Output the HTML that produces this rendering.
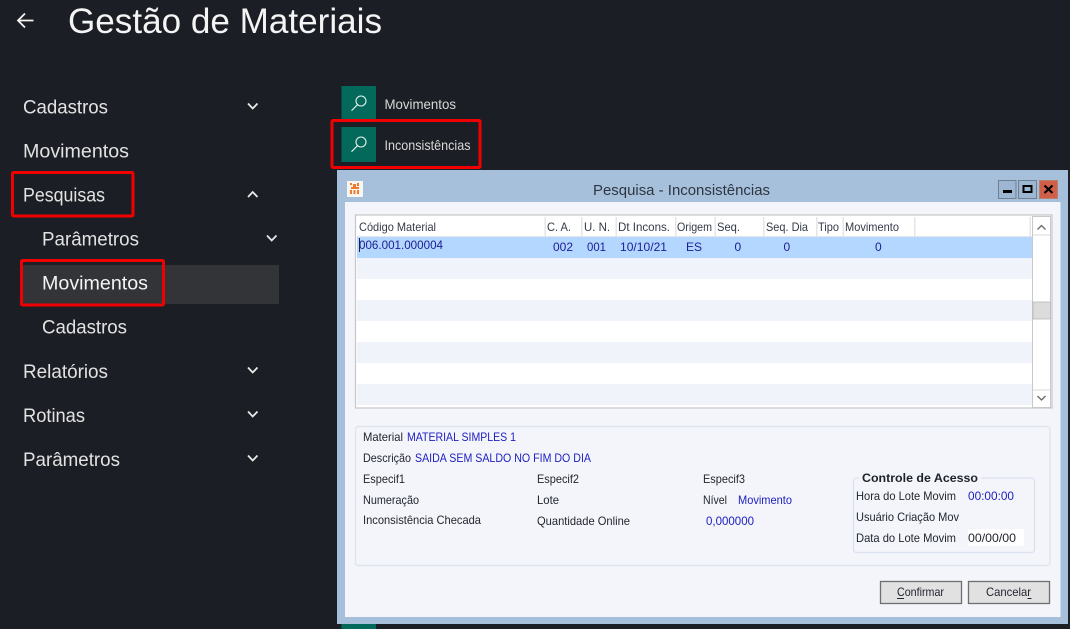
<!DOCTYPE html>
<html><head><meta charset="utf-8"><style>
html,body{margin:0;padding:0;background:#1b1e24;width:1070px;height:629px;overflow:hidden}
svg{display:block;font-family:"Liberation Sans",sans-serif}
.m{font-size:19.5px;fill:#e2e2e2}
.s{font-size:14px;fill:#d8d8d8}
.h{font-size:12px;fill:#333a48}
.v{font-size:12px;fill:#1c1c96}
.l{font-size:12px;fill:#22262e}
.b{font-size:12px;fill:#2020c0}
.c{fill:none;stroke:#e8e8e8;stroke-width:1.8}
.r{fill:none;stroke:#f00000;stroke-width:3}
</style></head><body>
<svg width="1070" height="629" viewBox="0 0 1070 629" xmlns="http://www.w3.org/2000/svg">
<rect width="1070" height="629" fill="#1b1e24"/>
<path d="M33.500 20.500H18M25 13.500L18 20.500L25 27.500" fill="none" stroke="#f2f2f2" stroke-width="1.800"/>
<text x="68" y="33" font-size="35" fill="#f4f4f4" textLength="314" lengthAdjust="spacingAndGlyphs">Gestão de Materiais</text>

<rect x="21" y="265" width="258" height="39" fill="#333437"/>
<text class="m" x="23" y="113.300" textLength="85" lengthAdjust="spacingAndGlyphs">Cadastros</text>
<text class="m" x="23" y="157.400" textLength="106" lengthAdjust="spacingAndGlyphs">Movimentos</text>
<text class="m" x="23" y="201.600" textLength="82" lengthAdjust="spacingAndGlyphs">Pesquisas</text>
<text class="m" x="42" y="245.600" textLength="97" lengthAdjust="spacingAndGlyphs">Parâmetros</text>
<text class="m" x="42" y="289.700" textLength="106" lengthAdjust="spacingAndGlyphs" style="fill:#f4f4f4">Movimentos</text>
<text class="m" x="42" y="333.700" textLength="85" lengthAdjust="spacingAndGlyphs">Cadastros</text>
<text class="m" x="23" y="377.800" textLength="85" lengthAdjust="spacingAndGlyphs">Relatórios</text>
<text class="m" x="23" y="421.800" textLength="62" lengthAdjust="spacingAndGlyphs">Rotinas</text>
<text class="m" x="23" y="466" textLength="97" lengthAdjust="spacingAndGlyphs">Parâmetros</text>

<path class="c" d="M248 103.500L252.700 108.500L257.500 103.500"/>
<path class="c" d="M248 197L252.700 192L257.500 197"/>
<path class="c" d="M267 235.500L271.700 240.500L276.500 235.500"/>
<path class="c" d="M248 367.500L252.700 372.500L257.500 367.500"/>
<path class="c" d="M248 411.500L252.700 416.500L257.500 411.500"/>
<path class="c" d="M248 455.500L252.700 460.500L257.500 455.500"/>

<rect x="341.500" y="86" width="34.500" height="33" fill="#036a5b"/>
<rect x="341.500" y="127" width="34.500" height="35" fill="#036a5b"/>
<rect x="341.500" y="624" width="34.500" height="5" fill="#036a5b"/>
<g fill="none" stroke="#e6f0ee" stroke-width="1.100">
<circle cx="361" cy="101" r="5"/><path d="M357.500 104.700L351.500 110.700"/>
<circle cx="361" cy="142" r="5"/><path d="M357.500 145.700L351.500 151.700"/>
</g>
<text class="s" x="384.500" y="109" textLength="71.500" lengthAdjust="spacingAndGlyphs">Movimentos</text>
<text class="s" x="384.500" y="150" textLength="86" lengthAdjust="spacingAndGlyphs">Inconsistências</text>

<!-- window -->
<rect x="337" y="170" width="731" height="454" fill="#a6c0dc"/>
<rect x="345" y="202" width="715.500" height="415" fill="#f3f5fb"/>
<rect x="347" y="181" width="16" height="16" fill="#f8f6f2"/>
<g fill="#f47a2a">
<rect x="350" y="183" width="2" height="2"/><rect x="353" y="184" width="3" height="3"/><rect x="357" y="183" width="2" height="3"/>
<rect x="351" y="187" width="8" height="2"/><rect x="350" y="190" width="2" height="4"/><rect x="353.500" y="190" width="2" height="4"/><rect x="357" y="190" width="2" height="4"/>
</g>
<text x="593" y="195" font-size="15" fill="#2f3640" textLength="177" lengthAdjust="spacingAndGlyphs">Pesquisa - Inconsistências</text>

<rect x="998.500" y="180.500" width="17.500" height="18" fill="#9db6d2" stroke="#6f7f92"/>
<rect x="1003" y="190" width="9" height="3" fill="#000"/>
<rect x="1018.500" y="180.500" width="18" height="18" fill="#9db6d2" stroke="#6f7f92"/>
<rect x="1023.500" y="186" width="8" height="6" fill="none" stroke="#000" stroke-width="2"/>
<rect x="1039.500" y="180.500" width="18" height="18" fill="#cf5f48" stroke="#b9806f"/>
<path d="M1044.500 185.500L1052.500 193M1052.500 185.500L1044.500 193" stroke="#000" stroke-width="2.200" fill="none"/>

<!-- table -->
<rect x="355.500" y="215" width="696.500" height="193" fill="#fff" stroke="#c6c6c6" stroke-width="1.200"/>
<rect x="357" y="218" width="673" height="19" fill="#fff"/>
<rect x="357" y="237" width="675" height="21" fill="#b3d7ff"/>
<rect x="357" y="258" width="675" height="21" fill="#f1f3fa"/>
<rect x="357" y="300" width="675" height="21" fill="#f1f3fa"/>
<rect x="357" y="342" width="675" height="21" fill="#f1f3fa"/>
<rect x="357" y="384" width="675" height="21" fill="#f1f3fa"/>
<g fill="#e4e6ea">
<rect x="544.500" y="217" width="1.500" height="20"/><rect x="581" y="217" width="1.500" height="20"/><rect x="615.500" y="217" width="1.500" height="20"/>
<rect x="675" y="217" width="1.500" height="20"/><rect x="714.500" y="217" width="1.500" height="20"/><rect x="763" y="217" width="1.500" height="20"/>
<rect x="816" y="217" width="1.500" height="20"/><rect x="842.500" y="217" width="1.500" height="20"/><rect x="914" y="217" width="1.500" height="20"/>
<rect x="1029.500" y="217" width="1.500" height="20"/><rect x="357" y="236" width="675" height="1"/>
</g>
<text class="h" x="359" y="231" textLength="77" lengthAdjust="spacingAndGlyphs">Código Material</text>
<text class="h" x="547" y="231" textLength="24" lengthAdjust="spacingAndGlyphs">C. A.</text>
<text class="h" x="584" y="231" textLength="26" lengthAdjust="spacingAndGlyphs">U. N.</text>
<text class="h" x="618" y="231" textLength="52" lengthAdjust="spacingAndGlyphs">Dt Incons.</text>
<text class="h" x="677" y="231" textLength="35" lengthAdjust="spacingAndGlyphs">Origem</text>
<text class="h" x="717" y="231" textLength="23" lengthAdjust="spacingAndGlyphs">Seq.</text>
<text class="h" x="766" y="231" textLength="42" lengthAdjust="spacingAndGlyphs">Seq. Dia</text>
<text class="h" x="818" y="231" textLength="21" lengthAdjust="spacingAndGlyphs">Tipo</text>
<text class="h" x="845" y="231" textLength="54" lengthAdjust="spacingAndGlyphs">Movimento</text>
<text class="v" x="359" y="249" textLength="84" lengthAdjust="spacingAndGlyphs">006.001.000004</text>
<rect x="359" y="238" width="1" height="14" fill="#1c1c50"/>
<text class="v" x="553" y="251" textLength="20" lengthAdjust="spacingAndGlyphs">002</text>
<text class="v" x="587" y="251" textLength="19" lengthAdjust="spacingAndGlyphs">001</text>
<text class="v" x="620" y="251" textLength="47" lengthAdjust="spacingAndGlyphs">10/10/21</text>
<text class="v" x="686" y="251">ES</text>
<text class="v" x="734.500" y="251">0</text>
<text class="v" x="783.500" y="251">0</text>
<text class="v" x="875" y="251">0</text>

<!-- scrollbar -->
<rect x="1032.500" y="216.500" width="18" height="191" fill="#fff" stroke="#c8c8c8"/>
<path d="M1033 235H1050M1033 390H1050" stroke="#d8d8d8"/>
<rect x="1033" y="302" width="17.500" height="17" fill="#dcdcdc" stroke="#b8b8b8" stroke-width=".8"/>
<path d="M1037.500 229.500L1041.500 225.500L1045.500 229.500M1037.500 396L1041.500 400L1045.500 396" fill="none" stroke="#666" stroke-width="1.300"/>

<!-- details -->
<rect x="355.500" y="426.500" width="694.500" height="139" rx="3" fill="#f3f5fb" stroke="#dde1ea" stroke-width="1.200"/>
<text class="l" x="363" y="441" textLength="40" lengthAdjust="spacingAndGlyphs">Material</text>
<text class="b" x="407" y="441" textLength="109" lengthAdjust="spacingAndGlyphs">MATERIAL SIMPLES 1</text>
<text class="l" x="363" y="462" textLength="48" lengthAdjust="spacingAndGlyphs">Descrição</text>
<text class="b" x="415" y="462" textLength="176" lengthAdjust="spacingAndGlyphs">SAIDA SEM SALDO NO FIM DO DIA</text>
<text class="l" x="363" y="483" textLength="42" lengthAdjust="spacingAndGlyphs">Especif1</text>
<text class="l" x="537" y="483" textLength="42" lengthAdjust="spacingAndGlyphs">Especif2</text>
<text class="l" x="703" y="483" textLength="42" lengthAdjust="spacingAndGlyphs">Especif3</text>
<text class="l" x="363" y="504" textLength="56" lengthAdjust="spacingAndGlyphs">Numeração</text>
<text class="l" x="537" y="504" textLength="22" lengthAdjust="spacingAndGlyphs">Lote</text>
<text class="l" x="703" y="504" textLength="24" lengthAdjust="spacingAndGlyphs">Nível</text>
<text class="b" x="738" y="504" textLength="54" lengthAdjust="spacingAndGlyphs">Movimento</text>
<text class="l" x="363" y="524" textLength="118" lengthAdjust="spacingAndGlyphs">Inconsistência Checada</text>
<text class="l" x="537" y="525" textLength="93" lengthAdjust="spacingAndGlyphs">Quantidade Online</text>
<text class="b" x="706" y="525" textLength="48" lengthAdjust="spacingAndGlyphs">0,000000</text>

<rect x="853.500" y="478" width="181" height="74.500" rx="3" fill="none" stroke="#d9e1ee" stroke-width="1.200"/>
<rect x="859" y="474" width="122" height="8" fill="#f3f5fb"/>
<text x="862" y="482" font-size="12" font-weight="bold" fill="#1e222a" textLength="116" lengthAdjust="spacingAndGlyphs">Controle de Acesso</text>
<text class="l" x="856" y="500" textLength="100" lengthAdjust="spacingAndGlyphs">Hora do Lote Movim</text>
<text class="b" x="968" y="500" textLength="46" lengthAdjust="spacingAndGlyphs">00:00:00</text>
<text class="l" x="856" y="521" textLength="103" lengthAdjust="spacingAndGlyphs">Usuário Criação Mov</text>
<text class="l" x="856" y="542" textLength="100" lengthAdjust="spacingAndGlyphs">Data do Lote Movim</text>
<rect x="968" y="529" width="56" height="17" fill="#fff"/>
<text class="l" x="968" y="542" textLength="48" lengthAdjust="spacingAndGlyphs">00/00/00</text>

<!-- buttons -->
<rect x="880.500" y="581.500" width="81" height="22" fill="#e1e1e1" stroke="#6f6f6f" stroke-width="1.300"/>
<rect x="968.500" y="581.500" width="81" height="22" fill="#e1e1e1" stroke="#6f6f6f" stroke-width="1.300"/>
<text class="l" x="897" y="596" textLength="47" lengthAdjust="spacingAndGlyphs">Confirmar</text>
<text class="l" x="986" y="596" textLength="45" lengthAdjust="spacingAndGlyphs">Cancelar</text>
<rect x="897" y="598" width="7" height="1" fill="#22262e"/>
<rect x="1027.500" y="598" width="4" height="1" fill="#22262e"/>

<!-- red boxes -->
<rect class="r" x="12.500" y="172.500" width="120.500" height="43.500" rx="1"/>
<rect class="r" x="21.500" y="260.500" width="142" height="44.500" rx="1"/>
<rect class="r" x="332" y="120.500" width="148" height="47" rx="1"/>
</svg>
</body></html>
